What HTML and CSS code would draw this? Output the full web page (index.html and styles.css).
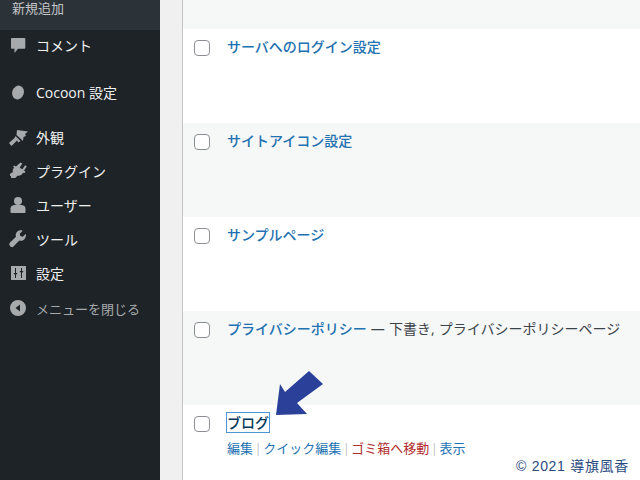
FILE: index.html
```html
<!DOCTYPE html>
<html lang="ja">
<head>
    <meta charset="UTF-8">
    <meta name="viewport" content="width=device-width, initial-scale=1.0">
    <title>固定ページ一覧</title>
    <link rel="stylesheet" href="styles.css">
</head>
<body>
    <div class="admin">
        <nav class="sidebar">
            <div class="submenu">新規追加</div>
            <ul class="menu">
                <li class="item item-comment">
                    <svg class="icon" viewBox="0 0 20 20"><path d="M4 3h12.500c.5 0 .8.3.8.800V13c0 .5-.3.800-.8.800H10L6.500 18v-4.200H4c-.5 0-1-.3-1-.800V3.800C3 3.300 3.500 3 4 3z"/></svg>
                    コメント
                </li>
                <li class="item item-cocoon">
                    <svg class="icon" viewBox="0 0 20 20"><ellipse cx="10" cy="10.500" rx="5.800" ry="7" transform="rotate(20 10 10.500)"/></svg>
                    Cocoon 設定
                </li>
                <li class="item">
                    <svg class="icon" viewBox="0 0 20 20"><path d="M9 3 20 4.500 17 7l1 2-2.500 1-.5 4-6.500-6zM7.500 9l5 5-2 1.500-1.500-2-5.500 5.500L1 16l5.500-5z"/></svg>
                    外観
                </li>
                <li class="item">
                    <svg class="icon" viewBox="0 0 20 20"><path d="M12.500 1.500l1.800 1-2.600 4.200 2.700 1.600 2.700-4 1.700 1.100-2.800 4.100 1.500 1-1 1.500-1.500-.3c-1 2-3 3.400-5.500 3l-2.200 2.300H3v-2.200l-1 .5v-2.500l2.800-1.500c-.4-2 .2-3.800 1.500-4.800L5 6l1-1.500 2 .9z"/></svg>
                    プラグイン
                </li>
                <li class="item">
                    <svg class="icon" viewBox="0 0 20 20"><circle cx="10" cy="6" r="4"/><path d="M2.500 17v-3.500C2.500 11 5 10 7 10h6c2 0 4.500 1 4.500 3.500V17c0 .6-.5 1-1 1h-13c-.5 0-1-.4-1-1z"/></svg>
                    ユーザー
                </li>
                <li class="item">
                    <svg class="icon" viewBox="0 0 20 20"><path d="M17.800 4.800l-3 3-2.400-.7-.7-2.400 3-3C12.500.9 10.300 1.500 9 3c-1.300 1.200-1.600 3-1 4.700L2 13.500c-1.200 1.200-.6 2.600 0 3.500.8 1 2.300 1.700 3.500.5l5.800-6c1.700.6 3.500.3 4.800-1 1.500-1.400 2.200-3.700 1.700-5.700z"/></svg>
                    ツール
                </li>
                <li class="item">
                    <svg class="icon" viewBox="0 0 20 20"><path fill-rule="evenodd" d="M3 3h15v14H3zM7 5v5H5.500l1 1.500h.500V15h1v-3.500h.500l1-1.500H8V5zm6 0v3h-1.500l1 1.500h.500V15h1V9.500h.500l1-1.500H14V5z"/></svg>
                    設定
                </li>
                <li class="item item-close">
                    <svg class="icon" viewBox="0 0 20 20"><path fill-rule="evenodd" d="M10 2a8 8 0 1 1 0 16 8 8 0 0 1 0-16zm2 4.500L7.500 10l4.500 3.500z"/></svg>
                    メニューを閉じる
                </li>
            </ul>
        </nav>
        <main class="content">
            <div class="table">
                <div class="row row-alt row-top"></div>
                <div class="row">
                    <span class="check"></span>
                    <div class="cell"><a class="title">サーバへのログイン設定</a></div>
                </div>
                <div class="row row-alt">
                    <span class="check"></span>
                    <div class="cell"><a class="title">サイトアイコン設定</a></div>
                </div>
                <div class="row">
                    <span class="check"></span>
                    <div class="cell"><a class="title">サンプルページ</a></div>
                </div>
                <div class="row row-alt">
                    <span class="check"></span>
                    <div class="cell"><a class="title">プライバシーポリシー</a><span class="state"> — 下書き, プライバシーポリシーページ</span></div>
                </div>
                <div class="row row-last">
                    <span class="check"></span>
                    <div class="cell">
                        <a class="title title-focus">ブログ</a>
                        <div class="actions">
                            <a>編集</a><span class="sep">|</span><a>クイック編集</a><span class="sep">|</span><a class="trash">ゴミ箱へ移動</a><span class="sep">|</span><a>表示</a>
                        </div>
                    </div>
                </div>
            </div>
            <svg class="arrow" viewBox="0 0 50 50"><path d="M5 14 10 22 34 1 48 14 22 33 32 44 1 45z"/></svg>
            <div class="credit">© 2021 導旗風香</div>
        </main>
    </div>
</body>
</html>
```

FILE: styles.css
```css
html, body {
    margin: 0;
    height: 100%;
    overflow: hidden;
}
body {
    font-family: "Open Sans", "Noto Sans CJK JP", sans-serif;
    font-size: 14px;
    background-color: #f0f0f1;
}
.admin {
    display: flex;
    height: 480px;
}
.sidebar {
    width: 160px;
    flex-shrink: 0;
    background-color: #1d2327;
    color: #f0f0f1;
}
.submenu {
    height: 30px;
    box-sizing: border-box;
    padding: 0 12px;
    font-size: 13px;
    line-height: 17px;
    color: #c3c4c7;
    background-color: #2c3338;
}
.menu {
    list-style: none;
    margin: 0;
    padding: 0;
}
.item {
    display: flex;
    align-items: center;
    gap: 8px;
    height: 34px;
    box-sizing: border-box;
    padding-left: 8px;
}
.item-comment {
    height: 30px;
}
.item-cocoon {
    height: 60px;
    padding-top: 4px;
}
.item-close {
    height: 36px;
    font-size: 13px;
    color: #a7aaad;
}
.icon {
    width: 20px;
    height: 20px;
    flex-shrink: 0;
    fill: #a7aaad;
}
.content {
    position: relative;
    flex: 1;
    padding-left: 22px;
    overflow: hidden;
}
.table {
    border-left: 1px solid #c3c4c7;
    background-color: #fff;
}
.row {
    display: flex;
    gap: 17px;
    height: 94px;
    box-sizing: border-box;
    padding: 8px 11px;
    color: #3c434a;
}
.row-alt {
    background-color: #f6f7f7;
}
.row-top {
    height: 29px;
}
.row-last {
    height: 75px;
}
.check {
    width: 14px;
    height: 14px;
    margin-top: 3px;
    flex-shrink: 0;
    background-color: #fff;
    border: 1px solid #8c8f94;
    border-radius: 4px;
}
.cell {
    line-height: 20px;
    white-space: nowrap;
}
.title {
    color: #2271b1;
    font-weight: 500;
}
.state {
    word-spacing: 0.500px;
}
.title-focus {
    color: #043959;
    box-shadow: 0 0 0 1px #4f94d4;
}
.actions {
    margin-top: 5px;
    font-size: 13px;
    color: #2271b1;
}
.sep {
    margin: 0 1.500px;
    color: #c3c4c7;
}
.trash {
    color: #b32d2e;
}
.arrow {
    position: absolute;
    left: 115px;
    top: 370px;
    width: 50px;
    height: 50px;
    fill: #2b4099;
}
.credit {
    position: absolute;
    right: 11px;
    bottom: 5px;
    font-family: "Liberation Sans", "Noto Sans CJK JP", sans-serif;
    font-size: 14px;
    letter-spacing: 0.700px;
    color: #2a4a80;
}
```
